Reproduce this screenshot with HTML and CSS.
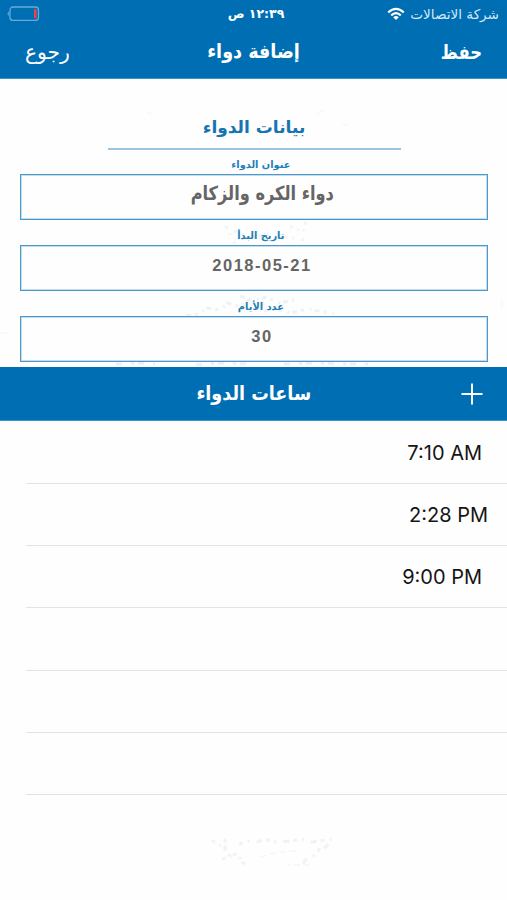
FILE: index.html
```html
<!DOCTYPE html>
<html lang="ar" dir="rtl">
<head>
<meta charset="utf-8">
<title>إضافة دواء</title>
<link rel="stylesheet" href="styles.css">
</head>
<body>
<div class="screen">
  <header class="top">
    <div class="status">
      <div class="carrier"><span>شركة الاتصالات</span>
        <svg class="wifi" viewBox="0 0 18 14" width="18" height="14"><g fill="none" stroke="#fff" stroke-width="2.2"><path d="M1.2 5.4Q9-1.8 16.8 5.4"/><path d="M4.2 8.4Q9 4 13.8 8.4"/></g><path d="M6.2 10.2Q9 8 11.8 10.2L9 13Z" fill="#fff"/></svg>
      </div>
      <div class="clock">١٢:٣٩ ص</div>
      <svg class="battery" viewBox="0 0 33 16" width="33" height="16"><rect x="3" y="1" width="28.5" height="13.4" rx="3" fill="none" stroke="#68a9db" stroke-width="1.3"/><path d="M1.8 5.2Q-.6 7.7 1.8 10.2Z" fill="#68a9db"/><rect x="27" y="3.2" width="2.6" height="9" fill="#ee4340"/></svg>
    </div>
    <nav class="nav">
      <a class="save">حفظ</a>
      <h1>إضافة دواء</h1>
      <a class="back">رجوع</a>
    </nav>
  </header>
  <main class="form">
    <svg class="specks" viewBox="0 0 507 288" width="507" height="288"><g fill="none" stroke-width="3"><path d="M226 147l5 10 4 8M306 143l-3 7 3 5M234 152l16 6 20-3 34 6M290 147l12 5" stroke="#f0f5f7" stroke-dasharray="3 5 2 7 5 4"/><path d="M186 237l14-2 6-6 14 2 8-7 13 4 9-8M240 217l14 5 12-4 14 6 14-3M270 228l20 6 18-4 28 5M262 222l4 12" stroke="#f1f0f7" stroke-dasharray="5 4 3 6 2 3"/><path d="M116 285l20-1 19 1M196 286l24-2 30 1M284 285l30-1 28 1h30" stroke="#efeff6" stroke-dasharray="6 9 3 4"/><path d="M146 34l7 1M316 36l8-5M342 46h6M0 254h7M502 221v8" stroke="#f9f9fa" stroke-width="2"/></g></svg>
    <h2>بيانات الدواء</h2>
    <div class="field"><div class="label">عنوان الدواء</div><div class="box name"><span>دواء الكره والزكام</span></div></div>
    <div class="field"><div class="label">تاريخ البدأ</div><div class="box" dir="ltr">2018-05-21</div></div>
    <div class="field"><div class="label">عدد الأيام</div><div class="box" dir="ltr">30</div></div>
  </main>
  <div class="section">
    <svg class="plus" viewBox="0 0 22 22" width="22" height="22"><path d="M11 .5v21M.5 11h21" stroke="#fff" stroke-width="2"/></svg>
    <h3>ساعات الدواء</h3>
  </div>
  <ul class="times" dir="ltr">
    <li>7:10 AM</li>
    <li class="wide">2:28 PM</li>
    <li>9:00 PM</li>
    <li></li>
    <li></li>
    <li></li>
  </ul>
  <svg class="foot" viewBox="0 0 130 32" width="130" height="32"><g fill="none" stroke-width="3"><path d="M2 3l4 4 8 3 4 8 10-1 4 8 5 3M14 2l4 6-4 4M12 22l10-3" stroke="#eff4f4" stroke-dasharray="4 5 2 3"/><path d="M29 7l10-3 9 1 6-3 10 3 18-1 8-2 12 3 20-3-6 8-6 1-4 7-8 2-6 8" stroke="#f0f2f6" stroke-dasharray="4 5 2 7 6 4"/><path d="M50 20l18-5 18-1M100 28h-22" stroke="#f7f8f8" stroke-dasharray="7 3" stroke-width="2"/></g></svg>
</div>
</body>
</html>
```
FILE: styles.css
```css
* { box-sizing: border-box; margin: 0; padding: 0; }
body { background: #fefefe; font-family: "DejaVu Sans", sans-serif; }
.screen { width: 507px; height: 900px; overflow: hidden; }
.top { height: 79px; background: #006eb3; color: #fff; border-bottom: 1px solid #3c94cb; }
.status { height: 27px; display: grid; grid-template-columns: 1fr auto 1fr; align-items: center; padding: 0 8px 0 7px; }
.carrier { display: flex; align-items: center; gap: 5px; font-size: 13.6px; line-height: 16px; color: #d5e9f7; white-space: nowrap; }
.clock { font-size: 12.5px; font-weight: bold; white-space: nowrap; transform: translateX(3px); }
.battery { justify-self: end; }
.nav { height: 51px; display: grid; grid-template-columns: 1fr auto 1fr; align-items: center; padding: 0 25px 1px; }
.nav h1 { font-size: 19.5px; line-height: 24px; transform: scaleX(.9); }
.save { font-size: 19.5px; font-weight: bold; justify-self: start; transform: scaleX(.84); transform-origin: right; }
.back { font-size: 20.3px; justify-self: end; }
.form { height: 288px; padding: 32px 19px 0 20px; position: relative; }
.specks { position: absolute; left: 0; top: 0; z-index: -1; }
.form h2 { width: 293px; height: 39px; margin: 0 auto; border-bottom: 2px solid #9bc4de; color: #1674b2; font-size: 17px; line-height: 33px; text-align: center; }
.field { height: 71px; padding-top: 7px; }
.label { height: 17px; padding-left: 14px; line-height: 16px; font-size: 10px; font-weight: bold; color: #247fb9; text-align: center; transform: scaleX(.98); }
.box { height: 46px; width: 468px; padding-left: 16px; border: 1.5px solid #4b98ca; box-shadow: inset 0 0 0 1px #c3ddee; color: #656565; font: bold 16.5px/39px "Liberation Sans", sans-serif; letter-spacing: 1.5px; text-align: center; background: #fefefe; }
.box.name { font: bold 19.5px/38px "DejaVu Sans", sans-serif; letter-spacing: 0; }
.name span { display: inline-block; transform: scaleX(.83); margin: 0 -20px; }
.section { height: 54px; background: #006eb3; color: #fff; display: grid; grid-template-columns: 1fr auto 1fr; align-items: center; padding: 0 24px; border-bottom: 1px solid #3c94cb; }
.section h3 { font-size: 19.5px; line-height: 24px; transform: scaleX(.9); }
.times { list-style: none; padding: .6px 0 0 26px; }
.times li { height: 62.3px; border-bottom: 1px solid #e3e3e3; padding-right: 25px; text-align: right; font: 20px/63px Inter, sans-serif; color: #151515; }
.times .wide { padding-right: 19px; }
.foot { display: block; margin: 42px 167px 0 0; }
```
